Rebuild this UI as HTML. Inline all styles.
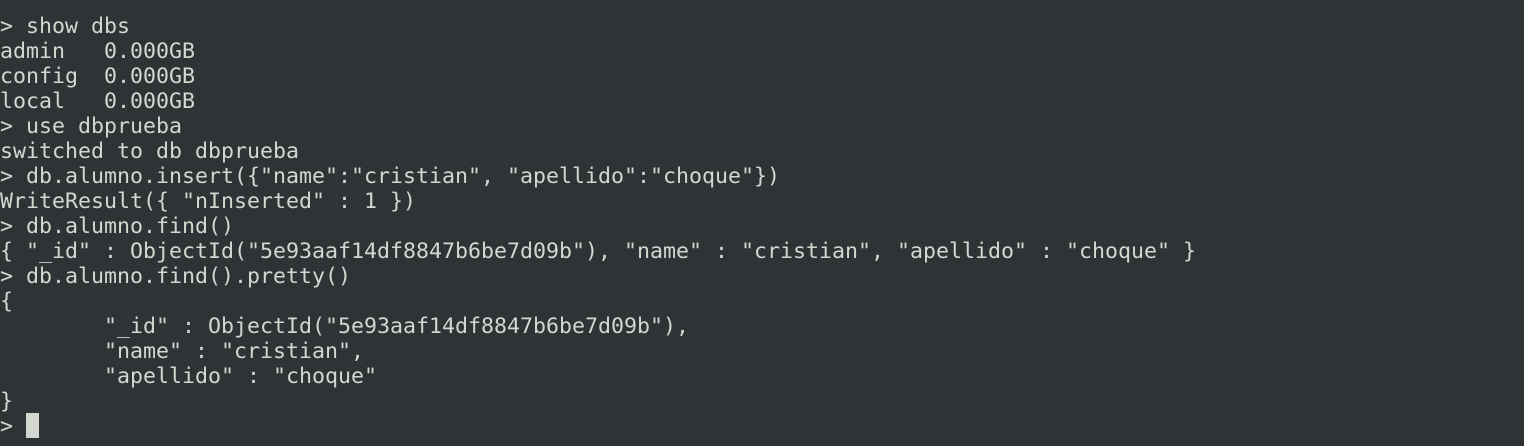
<!DOCTYPE html>
<html><head><meta charset="utf-8"><style>
html,body{margin:0;padding:0;background:#2e3436;width:1524px;height:446px;overflow:hidden}
pre{margin:0;padding:14px 0 0 0;font-family:"DejaVu Sans Mono","Liberation Mono",monospace;font-size:21.6px;line-height:25px;color:#d3d7cf;white-space:pre}
.c{display:inline-block;width:13px;height:25px;background:#d3d7cf;vertical-align:top;position:relative;top:-1px}
</style></head><body><pre>&gt; show dbs
admin   0.000GB
config  0.000GB
local   0.000GB
&gt; use dbprueba
switched to db dbprueba
&gt; db.alumno.insert({"name":"cristian", "apellido":"choque"})
WriteResult({ "nInserted" : 1 })
&gt; db.alumno.find()
{ "_id" : ObjectId("5e93aaf14df8847b6be7d09b"), "name" : "cristian", "apellido" : "choque" }
&gt; db.alumno.find().pretty()
{
        "_id" : ObjectId("5e93aaf14df8847b6be7d09b"),
        "name" : "cristian",
        "apellido" : "choque"
}
&gt; <span class="c"></span></pre></body></html>
